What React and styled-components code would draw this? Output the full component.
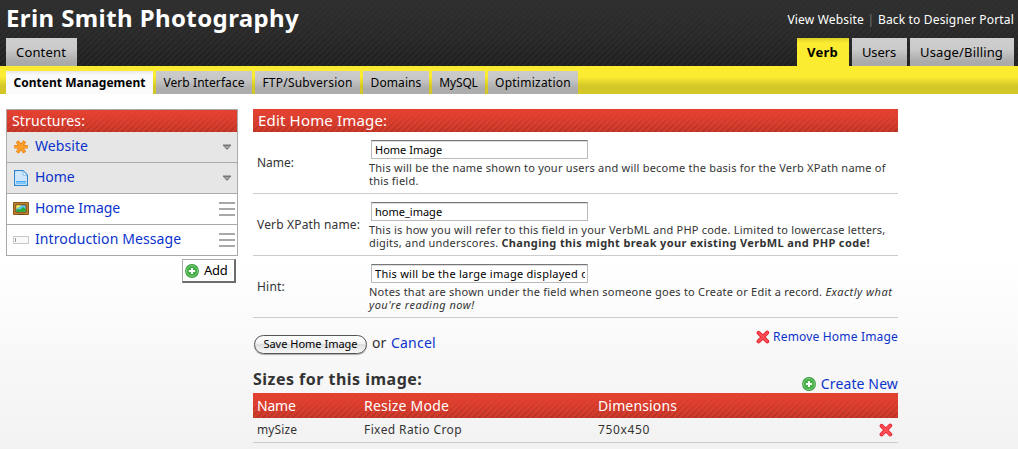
import React from "react";
import styled, { createGlobalStyle, css } from "styled-components";

const Global = createGlobalStyle`
  * { box-sizing: border-box; }
  html { background: #fff; }
  body {
    margin: 0;
    min-height: 449px;
    font-family: "Noto Sans", "Open Sans", sans-serif;
    font-size: 12px;
    color: #333;
    overflow: hidden;
    background: linear-gradient(#fff 0, #fff 258px, #f2f2f2 449px);
  }
  svg { flex: none; }
`;

const redBar = css`
  background:
    linear-gradient(rgba(228, 65, 49, 0.9) 15%, rgba(203, 57, 42, 0.15)),
    repeating-linear-gradient(135deg, transparent 0 2.2px, rgba(70, 20, 10, 0.26) 3px 3.6px, transparent 4.24px),
    linear-gradient(#e34131, #cb392a);
  color: #fff;
`;

const Header = styled.header`
  height: 66px;
  padding: 0 4px 0 6px;
  display: flex;
  justify-content: space-between;
  background:
    linear-gradient(rgba(48, 48, 48, 0.85), rgba(48, 48, 48, 0)),
    repeating-linear-gradient(135deg, transparent 0 2.2px, rgba(0, 0, 0, 0.25) 3px 3.6px, transparent 4.24px),
    linear-gradient(#303030, #252525);
`;
const HeaderSide = styled.div`
  display: flex;
  flex-direction: column;
  align-items: ${(p) => (p.$end ? "flex-end" : "flex-start")};
`;
const Title = styled.h1`
  margin: 0;
  height: 38px;
  font-size: 24px;
  line-height: 36px;
  letter-spacing: 0.4px;
  color: #fff;
`;
const TopLinks = styled.div`
  height: 38px;
  display: flex;
  line-height: 39px;
  color: #777;
`;
const TopLink = styled.a`
  color: #fff;
  letter-spacing: 0.17px;
`;
const Divider = styled.span`
  width: 14px;
  text-align: center;
`;
const Tabs = styled.nav`
  display: flex;
  gap: 3px;
`;
const Tab = styled.a`
  width: ${(p) => p.$w}px;
  height: 28px;
  padding-right: 1px;
  text-align: center;
  font-size: 13px;
  line-height: 28px;
  letter-spacing: ${(p) => p.$ls || 0}px;
  color: #000;
  background: linear-gradient(#cfcfcf, #cacaca 40%, #aaa 85%);
  ${(p) => p.$active && css`
    font-weight: 700;
    background: linear-gradient(#dccf28, #fbec32 5px);
  `}
`;
const SubBar = styled.nav`
  height: 28px;
  padding: 5px 6px 0;
  display: flex;
  gap: 3px;
  background: linear-gradient(#fbec32, #fbec32 38%, #d3c727 72%);
`;
const SubTab = styled.a`
  width: ${(p) => p.$w}px;
  height: 23px;
  text-align: center;
  line-height: 23px;
  letter-spacing: ${(p) => p.$ls || 0}px;
  color: #000;
  background: linear-gradient(#cbcbcb, #c7c7c7 35%, #adadad 75%);
  ${(p) => p.$active && css`
    font-weight: 700;
    background: linear-gradient(#e6e6e6, #fafafa 4px);
  `}
`;

const Body = styled.div`
  display: flex;
  align-items: flex-start;
  gap: 15px;
  padding: 15px 0 0 6px;
`;
const Sidebar = styled.aside`
  width: 232px;
  display: flex;
  flex-direction: column;
  align-items: flex-end;
`;
const Structures = styled.div`
  width: 232px;
  border: 1px solid #aaa;
  border-bottom: 0;
`;
const SideTitle = styled.div`
  ${redBar}
  height: 22px;
  padding-left: 5px;
  font-size: 14px;
  line-height: 21px;
  letter-spacing: 0.15px;
`;
const SideRow = styled.div`
  height: 31px;
  padding: 0 2px 0 6px;
  display: flex;
  align-items: center;
  border-bottom: 1px solid #aaa;
  background: ${(p) => (p.$shaded ? "#e6e6e6" : "#fff")};
`;
const SideLink = styled.a`
  flex: 1;
  padding: 0 0 2px 6px;
  font-size: 14px;
  line-height: 28px;
  letter-spacing: ${(p) => p.$ls || 0}px;
  color: #0b33cb;
`;
const Arrow = styled.svg`
  width: 8px;
  height: 6px;
  margin: 0 4px 1px 0;
`;
const Grip = styled.span`
  width: 16px;
  height: 14px;
  margin-bottom: 1px;
  background: repeating-linear-gradient(#a8a8a8 0 2px, transparent 2px 6px);
`;
const AddButton = styled.button`
  width: 54px;
  height: 24px;
  margin: 3px 2px 0 0;
  padding: 0 0 0 2px;
  display: flex;
  align-items: center;
  gap: 5px;
  border: 2px solid;
  border-width: 1px 2px 2px 1px;
  border-color: #aaa #6c6c6c #6c6c6c #aaa;
  background: #fff;
  font: 13px/20px "Noto Sans", sans-serif;
  letter-spacing: -0.3px;
  color: #000;
`;
const AddText = styled.span`
  padding-bottom: 1px;
`;

const Main = styled.main`
  width: 645px;
`;
const MainTitle = styled.div`
  ${redBar}
  height: 23px;
  padding-left: 5px;
  font-size: 15px;
  line-height: 23px;
  letter-spacing: 0.17px;
`;
const FieldRow = styled.div`
  height: 62px;
  display: flex;
  border-bottom: 1px solid #ccc;
`;
const Label = styled.label`
  width: 116px;
  padding-left: 4px;
  line-height: 61px;
  white-space: nowrap;
  letter-spacing: ${(p) => p.$ls || 0}px;
`;
const Field = styled.div`
  padding-top: 8px;
`;
const Input = styled.input`
  display: block;
  width: 217px;
  height: 19px;
  margin: 0 0 2px 2px;
  padding: 0 2px 1px 3px;
  border: 1px solid #bbb;
  border-top: 1px solid #777;
  border-radius: 0;
  outline: 0;
  box-shadow: inset 0 1px 0 #ddd;
  background: #fff;
  font: 11px "Noto Sans", sans-serif;
  letter-spacing: ${(p) => p.$ls || 0}px;
  color: #000;
`;
const HelpLine = styled.div`
  font-size: 11px;
  line-height: 13px;
  white-space: pre;
  letter-spacing: 0.225px;
  b { letter-spacing: 0.375px; }
  i { letter-spacing: 0.5px; }
`;
const Actions = styled.div`
  height: 49px;
  display: flex;
  padding-left: 1px;
`;
const SaveButton = styled.button`
  width: 113px;
  height: 19px;
  margin-top: 17px;
  padding: 0 0 2px;
  border: 1.5px solid #555;
  border-radius: 10px;
  background: linear-gradient(#fff, #f2f2f2 45%, #dedede 50%, #f8f8f8);
  box-shadow: 0 1px 1px rgba(0, 0, 0, 0.3);
  font: 11px/14px "Noto Sans", sans-serif;
  color: #000;
`;
const CancelText = styled.span`
  flex: 1;
  padding-left: 5px;
  font-size: 14px;
  line-height: 49px;
  word-spacing: 1px;
`;
const Link = styled.a`
  color: #0b33cb;
  font-size: ${(p) => p.$size}px;
  letter-spacing: ${(p) => p.$ls}px;
  word-spacing: 0;
`;
const IconLink = styled.span`
  height: ${(p) => p.$h}px;
  display: flex;
  align-items: center;
  gap: ${(p) => p.$gap}px;
`;
const SizesHead = styled.div`
  height: 26px;
  display: flex;
  align-items: flex-end;
  justify-content: space-between;
`;
const SizesTitle = styled.h2`
  margin: 0;
  font-size: 16px;
  line-height: 28px;
  height: 28px;
  letter-spacing: 0.48px;
`;
const SizeRow = styled.div`
  display: grid;
  grid-template-columns: 107px 234px 1fr auto;
  align-items: center;
  padding: 0 5px 0 4px;
  height: 25px;
  ${(p) => p.$head
    ? css`${redBar} font-size: 14px;`
    : css`line-height: 22px; border-bottom: 1px solid #ccc;`}
`;
const Cell = styled.span`
  letter-spacing: ${(p) => p.$ls || 0}px;
`;

const PlusIcon = () => (
  <svg width="14" height="14" viewBox="0 0 14 14">
    <circle cx="7" cy="7" r="6.9" fill="#2c9633" />
    <circle cx="7" cy="7" r="5.5" fill="#43b043" stroke="#8dd48a" strokeWidth=".9" />
    <path d="M7 3.9v6.2M3.9 7h6.2" stroke="#fff" strokeWidth="2.1" />
  </svg>
);
const CrossIcon = () => (
  <svg width="14" height="14" viewBox="0 0 14 14">
    <path d="M2.6 2.8 11.2 11.4M11.2 2.6 2.6 11.4" stroke="#e0202c" strokeWidth="4" strokeLinecap="round" />
    <path d="M2.7 2.8 11.1 11.3M11.1 2.7 2.7 11.3" stroke="#ff4d55" strokeWidth="2.4" strokeLinecap="round" />
  </svg>
);
const StarIcon = () => (
  <svg width="16" height="16" viewBox="0 0 16 16">
    <path d="M8 7.6 4.2 2.2M8 7.6 11.8 2.2M1.3 7.8H14.7M8 8 4.4 13.6M8 8 11.6 13.6" stroke="#e87a10" strokeWidth="3.5" />
    <path d="M8 7.6 4.4 2.7M8 7.6 11.6 2.7M1.8 7.8H14.2M8 8 4.7 13.1M8 8 11.3 13.1" stroke="#ffa12b" strokeWidth="2.2" />
  </svg>
);
const PageIcon = () => (
  <svg width="16" height="16" viewBox="0 0 16 16">
    <path d="M1.6.6H10l4.4 4.6v10.2H1.6z" fill="#f4faff" stroke="#2f86cf" strokeWidth="1.2" />
    <path d="M3 2h6.5v4H13v5H3z" fill="#cfe6fb" />
    <path d="M10 .8v4.4h4.2z" fill="#fff" stroke="#5aa3dd" strokeWidth=".8" />
    <path d="M3 11.2h10v1.3H3z" fill="#1e9af0" />
    <path d="M3 12.5h10V14H3z" fill="#7cc7f8" />
  </svg>
);
const PictureIcon = () => (
  <svg width="16" height="16" viewBox="0 0 16 16">
    <path d="M.5 1.5h15v12H.5z" fill="#c07f2e" stroke="#8f5a1e" />
    <path d="M5 13h6v1H5z" fill="#6d4013" />
    <path d="M2.9 3.9h10.2v7.2H2.9z" fill="#5cc9ef" stroke="#6e4212" strokeWidth=".9" />
    <path d="M3.3 4.3h5.2L3.3 8z" fill="#ffe449" />
    <path d="M3.3 10.7V9.3l2-1.3 2 .8 2.5-2.7 2.9 1.8v2.8z" fill="#2cab35" />
  </svg>
);
const FieldIcon = () => (
  <svg width="16" height="16" viewBox="0 0 16 16">
    <path d="M.5 4.5h15v7H.5z" fill="#fafafa" stroke="#c8c8c8" />
    <path d="M2.5 6v4" stroke="#999" />
  </svg>
);
const DownArrow = () => (
  <Arrow viewBox="0 0 8 6">
    <path d="M0 .5h8v1L4.5 5.5h-1L0 1.5z" fill="#777" />
    <path d="M1 2h6L5 4H3z" fill="#a0a0a0" />
  </Arrow>
);

const structures = [
  { name: "Website", Icon: StarIcon, ls: 0.07, shaded: true },
  { name: "Home", Icon: PageIcon, ls: -0.1, shaded: true },
  { name: "Home Image", Icon: PictureIcon, ls: -0.05 },
  { name: "Introduction Message", Icon: FieldIcon, ls: 0.1 },
];

export default function App() {
  return (
    <>
      <Global />
      <Header>
        <HeaderSide>
          <Title>Erin Smith Photography</Title>
          <Tabs><Tab $w={71} $ls={0.16}>Content</Tab></Tabs>
        </HeaderSide>
        <HeaderSide $end>
          <TopLinks>
            <TopLink>View Website</TopLink>
            <Divider>|</Divider>
            <TopLink>Back to Designer Portal</TopLink>
          </TopLinks>
          <Tabs>
            <Tab $w={52} $ls={0.2} $active>Verb</Tab>
            <Tab $w={55} $ls={-0.1}>Users</Tab>
            <Tab $w={104} $ls={0.15}>Usage/Billing</Tab>
          </Tabs>
        </HeaderSide>
      </Header>
      <SubBar>
        <SubTab $w={147} $ls={0.03} $active>Content Management</SubTab>
        <SubTab $w={96} $ls={0.07}>Verb Interface</SubTab>
        <SubTab $w={105} $ls={0.22}>FTP/Subversion</SubTab>
        <SubTab $w={66} $ls={0.1}>Domains</SubTab>
        <SubTab $w={53} $ls={-0.15}>MySQL</SubTab>
        <SubTab $w={90} $ls={0.24}>Optimization</SubTab>
      </SubBar>
      <Body>
        <Sidebar>
          <Structures>
            <SideTitle>Structures:</SideTitle>
            {structures.map(({ name, Icon, ls, shaded }) => (
              <SideRow key={name} $shaded={shaded}>
                <Icon />
                <SideLink $ls={ls}>{name}</SideLink>
                {shaded ? <DownArrow /> : <Grip />}
              </SideRow>
            ))}
          </Structures>
          <AddButton><PlusIcon /><AddText>Add</AddText></AddButton>
        </Sidebar>
        <Main>
          <MainTitle>Edit Home Image:</MainTitle>
          <FieldRow>
            <Label>Name:</Label>
            <Field>
              <Input defaultValue="Home Image" />
              <HelpLine>This will be the name shown to your users and will become the basis for the Verb XPath name of</HelpLine>
              <HelpLine>this field.</HelpLine>
            </Field>
          </FieldRow>
          <FieldRow>
            <Label $ls={0.17}>Verb XPath name:</Label>
            <Field>
              <Input defaultValue="home_image" />
              <HelpLine>This is how you will refer to this field in your VerbML and PHP code. Limited to lowercase letters,</HelpLine>
              <HelpLine>digits, and underscores. <b>Changing this might break your existing VerbML and PHP code!</b></HelpLine>
            </Field>
          </FieldRow>
          <FieldRow>
            <Label $ls={0.2}>Hint:</Label>
            <Field>
              <Input $ls={0.26} defaultValue="This will be the large image displayed on the home page." />
              <HelpLine>Notes that are shown under the field when someone goes to Create or Edit a record. <i>Exactly what</i></HelpLine>
              <HelpLine><i>you're reading now!</i></HelpLine>
            </Field>
          </FieldRow>
          <Actions>
            <SaveButton>Save Home Image</SaveButton>
            <CancelText>or <Link $size={14} $ls={0.24}>Cancel</Link></CancelText>
            <IconLink $h={37} $gap={3}>
              <CrossIcon />
              <Link $size={12} $ls={0.18}>Remove Home Image</Link>
            </IconLink>
          </Actions>
          <SizesHead>
            <SizesTitle>Sizes for this image:</SizesTitle>
            <IconLink $h={19} $gap={5}>
              <PlusIcon />
              <Link $size={14} $ls={0.12}>Create New</Link>
            </IconLink>
          </SizesHead>
          <SizeRow $head>
            <Cell $ls={-0.2}>Name</Cell>
            <Cell $ls={0.22}>Resize Mode</Cell>
            <Cell $ls={0.15}>Dimensions</Cell>
          </SizeRow>
          <SizeRow>
            <Cell $ls={0.1}>mySize</Cell>
            <Cell $ls={0.4}>Fixed Ratio Crop</Cell>
            <Cell $ls={0.65}>750x450</Cell>
            <CrossIcon />
          </SizeRow>
        </Main>
      </Body>
    </>
  );
}
